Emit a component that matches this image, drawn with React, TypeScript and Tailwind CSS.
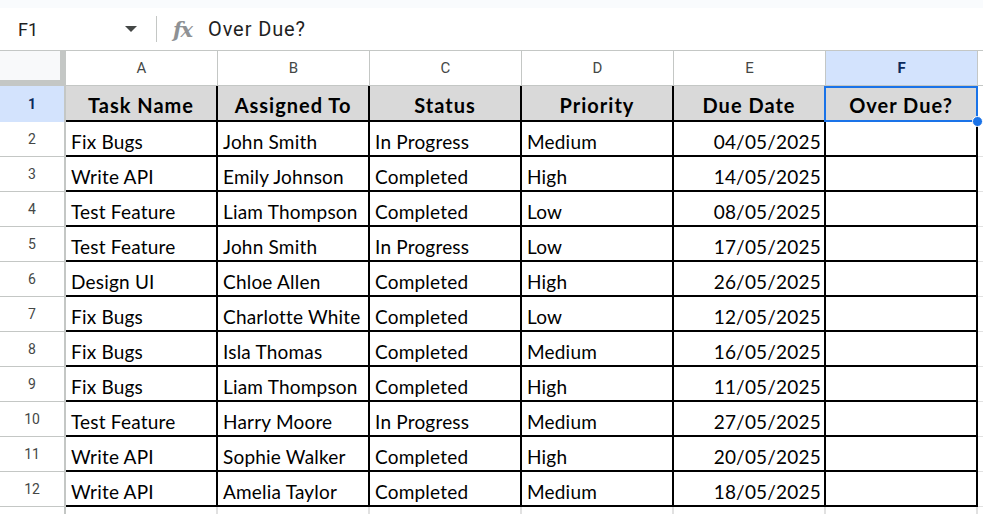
import React from 'react';

const rows: string[][] = [
  ['Fix Bugs', 'John Smith', 'In Progress', 'Medium', '04/05/2025'],
  ['Write API', 'Emily Johnson', 'Completed', 'High', '14/05/2025'],
  ['Test Feature', 'Liam Thompson', 'Completed', 'Low', '08/05/2025'],
  ['Test Feature', 'John Smith', 'In Progress', 'Low', '17/05/2025'],
  ['Design UI', 'Chloe Allen', 'Completed', 'High', '26/05/2025'],
  ['Fix Bugs', 'Charlotte White', 'Completed', 'Low', '12/05/2025'],
  ['Fix Bugs', 'Isla Thomas', 'Completed', 'Medium', '16/05/2025'],
  ['Fix Bugs', 'Liam Thompson', 'Completed', 'High', '11/05/2025'],
  ['Test Feature', 'Harry Moore', 'In Progress', 'Medium', '27/05/2025'],
  ['Write API', 'Sophie Walker', 'Completed', 'High', '20/05/2025'],
  ['Write API', 'Amelia Taylor', 'Completed', 'Medium', '18/05/2025'],
];

const headers = ['Task Name', 'Assigned To', 'Status', 'Priority', 'Due Date', 'Over Due?'];
const letters = ['A', 'B', 'C', 'D', 'E', 'F'];

const grid = 'grid grid-cols-[66px_repeat(6,152px)_1fr]';

export default function App() {
  return (
    <div className="w-[983px] h-[514px] overflow-hidden bg-white font-['Roboto',sans-serif]">
      {/* top strip */}
      <div className="h-[8px] bg-[#f9fbfd]" />

      {/* formula bar */}
      <div className="h-[43px] flex items-center border-b border-[#c4c7c5] text-[#1f1f1f]">
        <div className="w-[112px] pl-[18px] text-[18px]">F1</div>
        <svg width="14" height="8" viewBox="0 0 14 8" className="ml-[12px]">
          <path d="M1 1 L13 1 L7 7 Z" fill="#444746" />
        </svg>
        <div className="ml-[18px] w-px h-[26px] bg-[#c4c7c5]" />
        <span className="ml-[16px] w-[22px] text-[#8e9194] italic font-bold text-[21px] font-['DejaVu_Serif',serif] leading-none tracking-[-1.5px]">
          fx
        </span>
        <span className="ml-[13px] text-[20px] tracking-[0.9px]">Over Due?</span>
      </div>

      {/* column headers */}
      <div className={`${grid} h-[35px]`}>
        <div className="bg-[#f8f9fa] border-r-[6px] border-b-[6px] border-[#c4c7c5]" />
        {letters.map((l) => (
          <div
            key={l}
            className={`flex items-center justify-center border-r border-b border-[#c4c7c5] text-[15px] ${
              l === 'F' ? 'bg-[#d3e3fd] text-[#0b2a5c] font-bold' : 'text-[#444746]'
            }`}
          >
            {l}
          </div>
        ))}
        <div className="border-b border-[#c4c7c5]" />
      </div>

      {/* row 1 - header */}
      <div className={`${grid} h-[36px]`}>
        <div className="bg-[#d3e3fd] border-r-2 border-[#c4c7c5] flex items-center justify-center text-[14px] font-bold text-[#0b2a5c]">
          1
        </div>
        {headers.map((h, i) => (
          <div
            key={h}
            className="relative bg-[#d9d9d9] border-r-2 border-b-2 border-black flex items-end justify-center pb-[3px] font-['Lato',sans-serif] font-bold text-[20px] tracking-[1px] leading-[24px] text-black whitespace-nowrap"
          >
            {h}
            {i === 5 && (
              <>
                <div className="absolute -left-[2px] top-0 right-[-2px] bottom-[-2px] border-2 border-[#1a73e8]" />
                <div className="absolute -right-[7px] -bottom-[7px] w-[11px] h-[11px] rounded-full bg-[#1a73e8] border border-white z-10" />
              </>
            )}
          </div>
        ))}
        <div className="border-b border-[#e1e1e1]" />
      </div>

      {/* data rows */}
      {rows.map((r, ri) => (
        <div key={ri} className={`${grid} h-[35px]`}>
          <div className="border-r-2 border-b border-[#c4c7c5] flex items-center justify-center text-[14px] text-[#444746]">
            {ri + 2}
          </div>
          {r.map((c, ci) => (
            <div
              key={ci}
              className={`border-r-2 border-b-2 border-black flex items-end pb-[1px] font-['Lato',sans-serif] text-[19px] tracking-[0.2px] leading-[24px] text-black whitespace-nowrap overflow-hidden ${
                ci === 4 ? 'justify-end pr-[3px]' : 'pl-[5px]'
              }`}
            >
              {c}
            </div>
          ))}
          <div className="border-r-2 border-b-2 border-black" />
          <div className="border-b border-[#e1e1e1]" />
        </div>
      ))}

      {/* partial row 13 */}
      <div className={`${grid} h-[35px]`}>
        <div className="border-r-2 border-[#c4c7c5]" />
        {letters.map((l) => (
          <div key={l} className="border-r-2 border-[#e1e1e1]" />
        ))}
        <div />
      </div>
    </div>
  );
}
